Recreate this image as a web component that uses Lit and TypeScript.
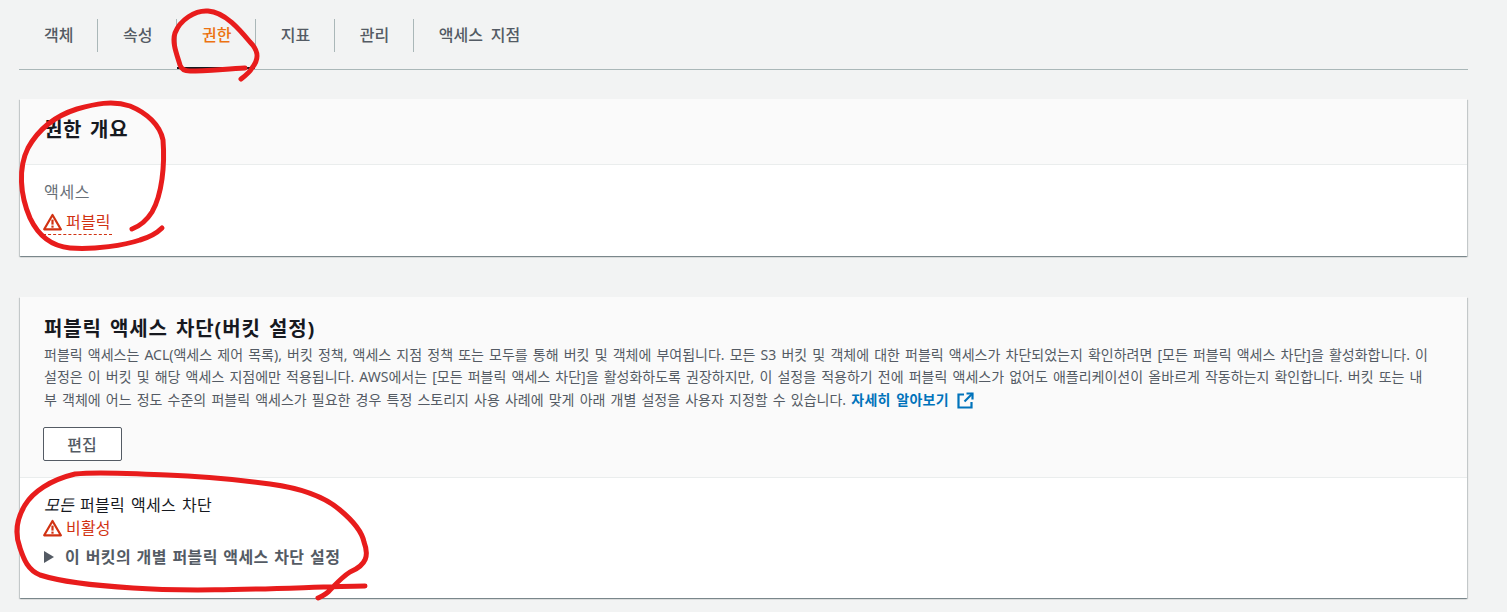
import { LitElement, html, css, svg } from "lit";
import { customElement } from "lit/decorators.js";

const warn = html`<svg class="warn" viewBox="0 0 19 18" width="19" height="18" aria-hidden="true">
  <path d="M9.5 2 L17.8 16.3 H1.2 Z" fill="none" stroke="#d13212" stroke-width="2.2" stroke-linejoin="round"/>
  <rect x="8.4" y="6.6" width="2.2" height="5" fill="#d13212"/><rect x="8.4" y="12.6" width="2.2" height="2.1" fill="#d13212"/>
</svg>`;

@customElement("app-root")
export class AppRoot extends LitElement {
  static styles = css`
    :host { display: block; position: relative; width: 1507px; height: 612px; overflow: hidden; background: #f2f3f3; color: #16191f;
      font-family: "Noto Sans", "Noto Sans CJK KR", sans-serif; font-size: 14px; line-height: 22px; }
    .page { padding: 19px 39px 0 19px; }
    .tabs { display: flex; height: 50px; border-bottom: 1px solid #aab7b8; }
    .tab { position: relative; height: 33px; padding: 0 23.4px 2px 25px; box-sizing: border-box; display: flex; align-items: center; font-size: 16px; font-weight: 500; color: #545b64; border-right: 1px solid #aab7b8; letter-spacing: .05px; word-spacing: 3.5px; }
    .tab:last-child { border-right: 0; }
    .tab.active { color: #ec7211; }
    .tab.active::after { content: ""; position: absolute; left: 0; right: 0; top: 48px; height: 2px; background: #16191f; }
    .card { margin: 0 1px; background: #fff; box-shadow: 0 1px 1px 0 rgba(0,28,36,.3), 1px 1px 1px 0 rgba(0,28,36,.15), -1px 1px 1px 0 rgba(0,28,36,.15); }
    .c1 { margin-top: 29px; height: 157px; }
    .c2 { margin-top: 41px; height: 301px; }
    .head { background: #fafafa; border-bottom: 1px solid #eaeded; padding: 0 24px; box-sizing: border-box; }
    .c1 .head { height: 66px; padding-top: 18px; }
    .c2 .head { height: 181px; padding-top: 19px; }
    h2 { margin: 0; font-size: 20px; line-height: 26px; font-weight: 700; color: #16191f; letter-spacing: .7px; word-spacing: 2px; }
    .c2 h2 { letter-spacing: .9px; }
    .desc { color: #545b64; line-height: 22.4px; margin-top: 2px; white-space: nowrap; font-size: 14px; word-spacing: 1.5px; }
    .desc div { height: 22.4px; }
    .link { color: #0073bb; font-weight: 700; letter-spacing: .3px; }
    .ext { vertical-align: -4px; margin-left: 3px; }
    button { display: block; margin: 16px 0 0 -1px; width: 79px; height: 34px; background: #fff; border: 1px solid #545b64; border-radius: 2px; font: 500 16px "Noto Sans", "Noto Sans CJK KR", sans-serif; color: #545b64; padding: 0 1px 0 0; }
    .body1 { padding: 16px 24px 0; }
    .label { color: #687078; font-size: 16px; letter-spacing: .7px; }
    .status { display: flex; align-items: center; gap: 4px; color: #d13212; font-size: 16px; margin-left: -1px; letter-spacing: .2px; }
    .pub { margin-top: 7px; width: 69px; border-bottom: 1px dashed #d13212; height: 24px; }
    .warn { flex: none; }
    .body2 { padding: 16px 24px 0; }
    .all { line-height: 22px; color: #16191f; font-size: 16px; letter-spacing: .3px; word-spacing: 1.5px; }
    .all i { font-style: italic; }
    .off { margin-top: 1px; height: 21px; }
    .exp { display: flex; align-items: center; margin-top: 8px; font-size: 16px; font-weight: 700; color: #545b64; gap: 11px; letter-spacing: .4px; word-spacing: 1px; }
    .ann { position: absolute; inset: 0; pointer-events: none; }
    .ann path { fill: none; stroke: #e81c1c; stroke-width: 5; stroke-linecap: round; stroke-linejoin: round; }
  `;

  render() {
    const tabs = ["객체", "속성", "권한", "지표", "관리", "액세스 지점"];
    return html`<div class="page">
      <div class="tabs">${tabs.map((t) => html`<div class="tab ${t === "권한" ? "active" : ""}">${t}</div>`)}</div>
      <section class="card c1">
        <div class="head"><h2>권한 개요</h2></div>
        <div class="body1">
          <div class="label">액세스</div>
          <div class="status pub">${warn}<span>퍼블릭</span></div>
        </div>
      </section>
      <section class="card c2">
        <div class="head">
          <h2>퍼블릭 액세스 차단(버킷 설정)</h2>
          <div class="desc">
            <div>퍼블릭 액세스는 ACL(액세스 제어 목록), 버킷 정책, 액세스 지점 정책 또는 모두를 통해 버킷 및 객체에 부여됩니다. 모든 S3 버킷 및 객체에 대한 퍼블릭 액세스가 차단되었는지 확인하려면 [모든 퍼블릭 액세스 차단]을 활성화합니다. 이</div>
            <div>설정은 이 버킷 및 해당 액세스 지점에만 적용됩니다. AWS에서는 [모든 퍼블릭 액세스 차단]을 활성화하도록 권장하지만, 이 설정을 적용하기 전에 퍼블릭 액세스가 없어도 애플리케이션이 올바르게 작동하는지 확인합니다. 버킷 또는 내</div>
            <div>부 객체에 어느 정도 수준의 퍼블릭 액세스가 필요한 경우 특정 스토리지 사용 사례에 맞게 아래 개별 설정을 사용자 지정할 수 있습니다. <span class="link">자세히 알아보기</span>
              <svg class="ext" width="17" height="17" viewBox="0 0 17 17" fill="none" stroke="#0073bb" stroke-width="2.2"><path d="M7 2.5 H1.5 V15.5 H14.5 V10"/><path d="M9.5 1.5 H15.5 V7.5"/><path d="M15.5 1.5 L7.5 9.5"/></svg>
            </div>
          </div>
          <button>편집</button>
        </div>
        <div class="body2">
          <div class="all"><i>모든</i> 퍼블릭 액세스 차단</div>
          <div class="status off">${warn}<span>비활성</span></div>
          <div class="exp"><svg width="10" height="12" viewBox="0 0 10 12"><path d="M0 0 L10 6 L0 12 Z" fill="#545b64"/></svg><span>이 버킷의 개별 퍼블릭 액세스 차단 설정</span></div>
        </div>
      </section>
    </div>
    <svg class="ann" viewBox="0 0 1507 612" width="1507" height="612">
      ${svg`<path d="M245 68 C225 69 205 71 190 71 C183 71 181 68 180 65 C176 52 172 42 175 33 C180 20 195 10 208 11 C225 12 240 30 250 42 C258 50 260 58 252 68 C250 72 245 76 241 79"/>
      <path d="M132 229 C140 226 147 220 152 212 C162 195 165 165 163 140 C160 125 147 113 130 106 C112 100 95 104 77 109 C55 116 38 130 28 148 C18 168 20 195 30 218 C38 235 50 246 70 248 C95 250 125 245 140 240 C150 237 158 232 162 228"/>
      <path d="M365 586 C300 587 200 593 133 588 C100 586 65 583 40 575 C28 570 24 560 20 548 C15 535 16 520 25 505 C33 492 50 480 75 474 C100 471 130 474 167 475 C200 476 240 480 270 484 C300 488 325 497 340 510 C352 520 362 532 364 542 C369 555 367 565 350 572 C342 577 335 585 330 590 C327 594 322 596 318 598"/>`}
    </svg>`;
  }
}
